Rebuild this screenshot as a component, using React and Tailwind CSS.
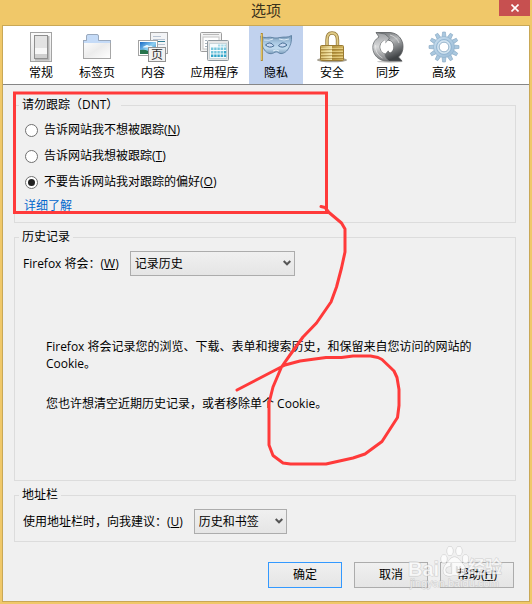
import { useState } from "react";

function GeneralIcon() {
  return (
    <svg viewBox="0 0 32 32" className="h-8 w-8">
      <defs>
        <linearGradient id="plate" x1="0" y1="0" x2="0" y2="1">
          <stop offset="0" stopColor="#fafafa" />
          <stop offset="1" stopColor="#e2e2e2" />
        </linearGradient>
      </defs>
      <rect x="5.5" y="1.5" width="21" height="29" fill="url(#plate)" stroke="#a3a3a3" />
      <path d="M10 28.5h13.5V5" fill="none" stroke="#b5b5b5" strokeWidth="2" />
      <rect x="9.5" y="4.5" width="13" height="23" fill="#e3e3e3" stroke="#8f8f8f" />
      <rect x="10" y="17" width="12" height="6" fill="#f8f8f8" />
      <rect x="10" y="23" width="12" height="4" fill="#cfcfcf" />
    </svg>
  );
}

function TabsIcon() {
  return (
    <svg viewBox="0 0 32 32" className="h-8 w-8">
      <defs>
        <linearGradient id="tabPage" x1="0" y1="0" x2="1" y2="1">
          <stop offset="0" stopColor="#ffffff" />
          <stop offset="0.5" stopColor="#ececec" />
          <stop offset="1" stopColor="#ffffff" />
        </linearGradient>
      </defs>
      <rect x="2.5" y="9.5" width="27" height="18" fill="url(#tabPage)" stroke="#a6a6a6" />
      <path d="M3 12V9.5h2.5V5q0-1.500 1.500-1.500h9q1.500 0 1.500 1.500v4.500H29V12z" fill="#c5dbf7" />
      <path d="M2.500 12V9.500h3V5q0-1.500 1.500-1.500h9q1.500 0 1.500 1.500v4.500h12V12" fill="none" stroke="#9aa9bd" />
    </svg>
  );
}

function ContentIcon() {
  return (
    <svg viewBox="0 0 32 32" className="h-8 w-8">
      <defs>
        <linearGradient id="sky" x1="0" y1="0" x2="1" y2="1">
          <stop offset="0" stopColor="#1668c4" />
          <stop offset="0.5" stopColor="#8fd0f2" />
          <stop offset="1" stopColor="#1e6fae" />
        </linearGradient>
      </defs>
      <rect x="13.5" y="1.5" width="17" height="21" fill="#f3f4f6" stroke="#a3a3a3" />
      <path d="M16 5.500h8M16 8.500h12M16 13.500h12M22 16.500h6" stroke="#b9c4d2" />
      <path d="M16 10.500h12" stroke="#2f7d93" />
      <rect x="1.5" y="9.5" width="19" height="15" fill="#fff" stroke="#a3a3a3" />
      <rect x="3" y="11" width="16" height="12" fill="url(#sky)" />
      <path d="M8 15q2-2 4 0q3-1 4 1.500H6q0-1.500 2-1.500" fill="#e8f7ff" />
      <path d="M3 19q5-1 8 1l8-1v4H3z" fill="#26734c" />
      <rect x="11.5" y="16.5" width="17" height="14" fill="#f1f1f1" stroke="#929292" />
      <text x="20" y="28" textAnchor="middle" fontSize="12" fontFamily="Noto Sans CJK SC, sans-serif" fill="#333">页</text>
    </svg>
  );
}

function AppsIcon() {
  const rows = [16.5, 20, 23.5];
  const cols = [12, 15.2, 18.4, 21.6, 24.8];
  return (
    <svg viewBox="0 0 32 32" className="h-8 w-8">
      <rect x="1.5" y="1.5" width="21" height="19" rx="1" fill="#f2f2f2" stroke="#9d9d9d" />
      <path d="M4 3.500h16" stroke="#b8b8b8" />
      <rect x="4" y="6" width="16" height="12" fill="#fff" stroke="#c4c4c4" />
      <path d="M6 9.500h2M6 12.500h2M6 15.500h2" stroke="#a9b4bf" />
      <rect x="8.5" y="9.5" width="21" height="20" rx="1" fill="#e5e5e5" stroke="#8f989e" />
      <rect x="10.5" y="12.5" width="17" height="15" fill="#f5fbfd" stroke="#c7d5da" />
      {rows.map((y, r) =>
        cols.map((x, c) => (
          <rect key={`${r}-${c}`} x={x} y={y} width="2.4" height="2.5" fill={r === 2 && c < 3 ? "#30a4c8" : r + c > 4 ? "#39a9cb" : "#76c5dc"} />
        ))
      )}
      <path d="M19 14.500h8" stroke="#a7d9e8" strokeWidth="2" strokeDasharray="2.4 0.8" />
    </svg>
  );
}

function PrivacyIcon() {
  return (
    <svg viewBox="0 0 32 32" className="h-8 w-8">
      <defs>
        <linearGradient id="mask" x1="0" y1="0" x2="0" y2="1">
          <stop offset="0" stopColor="#7798b6" />
          <stop offset="0.4" stopColor="#a9c8e2" />
          <stop offset="0.7" stopColor="#c3dcf0" />
          <stop offset="1" stopColor="#7f9fbd" />
        </linearGradient>
      </defs>
      <path
        d="M.8 5C5 8 8 5.500 12 6.500c3 .7 5 .7 8 0C24 5.500 28 7 31.500 4.500c.3 6-.7 10-4 14.500-2.500 3-6 4.500-8.500 3-2-1.500-3.500-1.500-5.500 0-3 1.500-6.500.5-9-3C2 15.500 1 11 .8 5z"
        fill="url(#mask)"
        stroke="#5b7fa0"
        strokeWidth="0.9"
      />
      <path d="M4 9q5 1 9-1M19 8q5 2 10 0M13 20q3-2 6 0" fill="none" stroke="#dcebf7" />
      <path d="M5.500 14q4.500-4.500 8.500.8q-4.500 3-8.500-.8zM18.500 14.800q4-5.300 8.500-.8q-4 3.800-8.500.8z" fill="#c9daf3" stroke="#466c93" />
      <path d="M1.800 2v28" stroke="#b18a2e" strokeWidth="2" />
      <path d="M1.500 3v26" stroke="#ecd06c" strokeWidth="0.8" />
    </svg>
  );
}

function SecurityIcon() {
  return (
    <svg viewBox="0 0 32 32" className="h-8 w-8">
      <defs>
        <linearGradient id="brass" x1="0" y1="0" x2="1" y2="0">
          <stop offset="0" stopColor="#c2a452" />
          <stop offset="0.48" stopColor="#efe2ab" />
          <stop offset="0.52" stopColor="#b3923d" />
          <stop offset="1" stopColor="#d2b561" />
        </linearGradient>
      </defs>
      <ellipse cx="16" cy="29" rx="15" ry="2.3" fill="#a8a294" />
      <path d="M11 16V9c0-5 2-7 5-7s5.500 2 5.500 7v7" fill="none" stroke="#95793a" strokeWidth="3.4" />
      <path d="M11 16V9c0-5 2-7 5-7s5.500 2 5.500 7v7" fill="none" stroke="#dfca86" strokeWidth="1.8" />
      <rect x="4.5" y="14.5" width="23" height="15" rx="1" fill="url(#brass)" stroke="#9a7b33" />
      <path d="M5 18.500h22M5 21.500h22M5 24.500h22M5 27.500h22" stroke="#917026" strokeOpacity="0.5" />
      <path d="M5 17.500h22M5 20.500h22M5 23.500h22M5 26.500h22" stroke="#fff0aa" strokeOpacity="0.5" />
    </svg>
  );
}

function SyncIcon() {
  return (
    <svg viewBox="0 0 32 32" className="h-8 w-8">
      <defs>
        <linearGradient id="steelA" x1="0" y1="0" x2="0" y2="1">
          <stop offset="0" stopColor="#9b9da0" />
          <stop offset="0.5" stopColor="#d9dadb" />
          <stop offset="1" stopColor="#77797c" />
        </linearGradient>
        <linearGradient id="steelB" x1="0" y1="0" x2="0.4" y2="1">
          <stop offset="0" stopColor="#66696c" />
          <stop offset="0.45" stopColor="#b4b6b8" />
          <stop offset="1" stopColor="#3f4245" />
        </linearGradient>
      </defs>
      <ellipse cx="18" cy="30.5" rx="13" ry="1.2" fill="#c4c4c4" />
      <path
        d="M4 1.500h14C26 2 31 8.500 31 15.500c0 4.500-1.500 8-4.500 10.500l3.500 4H17c-2.500-2-4.500-4.500-5-7.500l4-3 1 2.500c3-1 4.500-3.500 4.500-6.500 0-3.500-2-6-5.500-6.500z"
        fill="url(#steelB)"
        stroke="#55585b"
        strokeWidth="0.8"
      />
      <path
        d="M4 1.500l3 4.500C3 8.500 .8 12 .8 16.500c0 7.500 6 13.500 14 13.500h2.200c-2.500-2-4-4.500-4-7.500-3-1-5-3.500-5-6.500s1.500-5 4-6l1.500 2.500L17.500 7 13 3z"
        fill="url(#steelA)"
        stroke="#66696c"
        strokeWidth="0.8"
      />
      <path d="M8.500 16c0-3.500 2-6 4.500-6.500l.5 3 2.500-3 1 2 2-1c1.500 1.500 2.300 3 2.300 5.500s-1 4.500-2.800 5.500l-2-2.500-3 3.500c-3-.5-5-3.500-5-6.500z" fill="#fff" />
      <path d="M18 4q7 2 9 8M3.500 14q-.5 9 7 13" fill="none" stroke="#f1f1f2" strokeOpacity="0.6" />
    </svg>
  );
}

function AdvancedIcon() {
  const teeth = Array.from({ length: 12 }, (_, i) => i * 30);
  return (
    <svg viewBox="0 0 32 32" className="h-8 w-8">
      <defs>
        <linearGradient id="gear" x1="0" y1="0" x2="1" y2="1">
          <stop offset="0" stopColor="#c9deee" />
          <stop offset="1" stopColor="#98bad6" />
        </linearGradient>
      </defs>
      {teeth.map((angle) => (
        <path key={angle} d="M14 6.500l.6-5.500h2.800l.6 5.500z" fill="#aac8df" stroke="#86a6c1" strokeWidth="0.6" transform={`rotate(${angle} 16 16)`} />
      ))}
      <circle cx="16" cy="16" r="10.5" fill="url(#gear)" stroke="#8fb0cb" strokeWidth="0.6" />
      <circle cx="16" cy="16" r="7.5" fill="none" stroke="#94b6d2" />
      <circle cx="16" cy="16" r="6" fill="none" stroke="#d4e5f1" strokeWidth="1.4" />
      <circle cx="16" cy="16" r="4.8" fill="#fff" stroke="#8aa9c3" strokeWidth="0.8" />
    </svg>
  );
}

const TABS = [
  { label: "常规", Icon: GeneralIcon },
  { label: "标签页", Icon: TabsIcon },
  { label: "内容", Icon: ContentIcon },
  { label: "应用程序", Icon: AppsIcon, wide: true },
  { label: "隐私", Icon: PrivacyIcon },
  { label: "安全", Icon: SecurityIcon },
  { label: "同步", Icon: SyncIcon },
  { label: "高级", Icon: AdvancedIcon },
];

const TRACKING = [
  { label: "告诉网站我不想被跟踪", accessKey: "N" },
  { label: "告诉网站我想被跟踪", accessKey: "T" },
  { label: "不要告诉网站我对跟踪的偏好", accessKey: "O" },
];

function Group({ title, className, children }) {
  return (
    <fieldset className={`min-w-0 border border-[#dcdcdc] px-2 ${className}`}>
      <legend className="-ml-1 px-[3px] leading-4">{title}</legend>
      {children}
    </fieldset>
  );
}

function Dropdown({ id, options, className }) {
  return (
    <div className={`relative ${className}`}>
      <select
        id={id}
        className="block h-[25px] w-full appearance-none border border-[#acacac] bg-linear-to-b from-[#f0f0f0] to-[#e5e5e5] pl-1 outline-none"
      >
        {options.map((option) => (
          <option key={option}>{option}</option>
        ))}
      </select>
      <svg viewBox="0 0 8 6" className="pointer-events-none absolute right-1 top-[9px] h-[6px] w-2">
        <path d="M.7 1L4 4.300 7.300 1" fill="none" stroke="#555" strokeWidth="2" />
      </svg>
    </div>
  );
}

function DialogButton({ primary, children }) {
  return (
    <button
      type="button"
      className={`h-[26px] w-[74px] border bg-linear-to-b from-[#f0f0f0] to-[#e5e5e5] ${primary ? "border-[#3399ff]" : "border-[#acacac]"}`}
    >
      {children}
    </button>
  );
}

function Watermark() {
  return (
    <svg viewBox="0 0 96 52" className="pointer-events-none absolute bottom-[8px] right-[28px] h-[52px] w-24">
      <g fill="#fff" fillOpacity="0.7" stroke="#b8b8b8" strokeWidth="1" strokeOpacity="0.6" paintOrder="stroke">
        <text x="0" y="32" fontSize="20" fontWeight="bold" fontFamily="Liberation Sans, sans-serif">Bai</text>
        <ellipse cx="36" cy="15" rx="3" ry="4.2" />
        <ellipse cx="42" cy="7" rx="3" ry="4.5" />
        <ellipse cx="51" cy="7" rx="3" ry="4.5" />
        <ellipse cx="57.5" cy="15" rx="3" ry="4.2" />
        <path
          fillRule="evenodd"
          d="M46.500 13c4 0 5.500 4 8.500 7s5 11-2 12c-3 .3-4-.8-6.500-.8s-3.500 1.100-6.500.8c-7-1-5-9-2-12s4.500-7 8.500-7zM41 22.500a3.500 3.500 0 100 7h3v-10h-1.500v3zM48 22.500v5q0 2 2 2h3v-7h-1.500v5.500h-2v-5.500z"
        />
        <text x="60" y="29" fontSize="17" fontWeight="bold" fontFamily="Noto Sans CJK SC, sans-serif">经验</text>
        <text x="2" y="43" fontSize="11" fontFamily="Liberation Sans, sans-serif">jingyan.baidu.com</text>
      </g>
    </svg>
  );
}

// Hand-drawn marks that lie over the dialog
function Marks() {
  return (
    <svg width="532" height="604" className="pointer-events-none absolute left-0 top-0" fill="none" stroke="#ff3a3a" strokeWidth="3" strokeLinecap="round" strokeLinejoin="round">
      <rect x="14.5" y="93" width="312" height="119.5" strokeLinejoin="miter" />
      <path d="M321 206.500l4 1 4 5 12.500 10.500 3.500 6v23l-3.500 16-5 19-5.500 15-14.500 21-13.500 14-13 18-8.500 12-8.500 20-4 16v42l4 10.500 10 7.500 7.500 1h35.500l27-6 12-4 17-12.500 15.500-24 1.500-12v-16l-2-12-3-6.500-12-11.500-4-2-7.500-1.500h-17.500l-11.500 1.500H326l-26 3.500-15 4-48 25" />
    </svg>
  );
}

export default function App() {
  const [tab, setTab] = useState("隐私");
  const [tracking, setTracking] = useState("O");

  return (
    <div className="relative flex min-h-screen flex-col bg-[#f0c869] px-[2px] pb-[2px] font-['Open_Sans','Noto_Sans_CJK_SC',sans-serif] text-xs text-black">
      <header className="relative flex h-[25px] items-start justify-center">
        <h1 className="text-[15px] leading-[21px] text-[#3b321c]">选项</h1>
        <button type="button" aria-label="关闭" className="absolute right-0 top-0 grid h-4 w-[31px] place-items-center bg-[#c75050]">
          <svg viewBox="0 0 8 8" className="h-2 w-2">
            <path d="M.5.5l7 7M7.500.5l-7 7" stroke="#fff" strokeWidth="1.6" />
          </svg>
        </button>
      </header>

      <main className="flex flex-1 flex-col border border-[#c9a856] bg-[#f0f0f0]">
        <nav className="flex gap-[2px] border-b border-[#868686] bg-white pl-[11px]">
          {TABS.map(({ label, Icon, wide }) => (
            <button
              key={label}
              type="button"
              onClick={() => setTab(label)}
              className={`flex flex-col items-center pt-[5px] pb-px ${wide ? "w-[65px]" : "w-[54px]"} ${tab === label ? "bg-[#c1d2ee]" : ""}`}
            >
              <Icon />
              <span className="leading-5">{label}</span>
            </button>
          ))}
        </nav>

        <div className="flex flex-1 flex-col gap-[6px] pb-[13px] pl-[11px] pr-[13px] pt-3">
          <Group title="请勿跟踪（DNT）" className="pb-[5px]">
            <div className="pt-1">
              {TRACKING.map(({ label, accessKey }) => (
                <label key={accessKey} className="flex h-[26px] items-center gap-[6px] pl-[2px]">
                  <input
                    type="radio"
                    name="tracking"
                    checked={tracking === accessKey}
                    onChange={() => setTracking(accessKey)}
                    className="grid h-[13px] w-[13px] appearance-none place-items-center rounded-full border border-[#707070] bg-white before:h-[7px] before:w-[7px] before:rounded-full checked:before:bg-[#212121]"
                  />
                  <span>
                    {label}(<u>{accessKey}</u>)
                  </span>
                </label>
              ))}
            </div>
            <a href="#dnt" className="block w-fit pl-px leading-[22px] text-[#0066cc]">
              详细了解
            </a>
          </Group>

          <Group title="历史记录" className="flex-1">
            <div className="flex items-center gap-[11px] pt-[6px]">
              <label htmlFor="history">
                Firefox 将会：(<u>W</u>)
              </label>
              <Dropdown id="history" options={["记录历史", "不记录历史", "使用自定义历史设置"]} className="w-[165px]" />
            </div>
            <div className="flex flex-col gap-[23px] pl-[23px] pr-6 pt-[62px] leading-[17px]">
              <p>Firefox 将会记录您的浏览、下载、表单和搜索历史，和保留来自您访问的网站的 Cookie。</p>
              <p>您也许想清空近期历史记录，或者移除单个 Cookie。</p>
            </div>
          </Group>

          <Group title="地址栏" className="pb-[7px]">
            <div className="flex items-center gap-[11px] pt-[6px]">
              <label htmlFor="suggest">
                使用地址栏时，向我建议：(<u>U</u>)
              </label>
              <Dropdown id="suggest" options={["历史和书签", "历史", "书签", "无"]} className="w-[93px]" />
            </div>
          </Group>

          <footer className="flex justify-end gap-3 pr-[2px] pt-[14px]">
            <DialogButton primary>确定</DialogButton>
            <DialogButton>取消</DialogButton>
            <DialogButton>
              帮助(<u>H</u>)
            </DialogButton>
          </footer>
        </div>
      </main>

      <Watermark />
      <Marks />
    </div>
  );
}
